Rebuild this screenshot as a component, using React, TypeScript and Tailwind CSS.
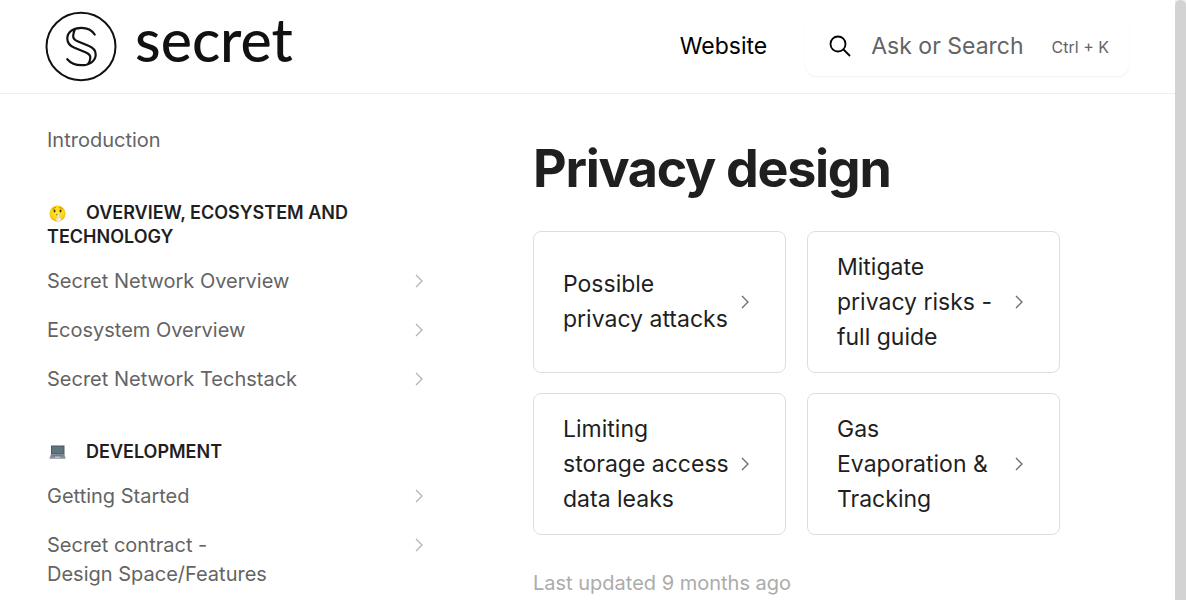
import React from "react";

type NavItem = { lines: string[]; hasChildren?: boolean };
type NavGroup = { title: string; icon: React.ReactNode; items: NavItem[] };

function Chevron({ className }: { className: string }) {
  return (
    <svg viewBox="0 0 16 16" className={className} fill="none" stroke="currentColor" aria-hidden="true">
      <path d="M5 2 11 8 5 14" strokeWidth="1.3" />
    </svg>
  );
}

function ShushIcon() {
  return (
    <svg viewBox="0 0 34 34" className="mr-5 ml-0.5 inline-block size-[17px] align-[-3px]" aria-hidden="true">
      <defs>
        <radialGradient id="face" cx="50%" cy="45%" r="55%">
          <stop offset="0" stopColor="#ffe92e" />
          <stop offset="0.7" stopColor="#fdd818" />
          <stop offset="1" stopColor="#f2aa12" />
        </radialGradient>
      </defs>
      <circle cx="17" cy="17" r="16" fill="url(#face)" />
      <path d="M7 8q3-3 6-3M21 5q3 0 6 3" fill="none" stroke="#a87a1a" strokeWidth="1.6" strokeLinecap="round" />
      <ellipse cx="11" cy="12" rx="2" ry="2.800" fill="#453016" />
      <ellipse cx="23" cy="12" rx="2" ry="2.800" fill="#453016" />
      <path d="M14 20q3-2 6 0" fill="none" stroke="#9b5a16" strokeWidth="2" />
      <path d="M17 19q2-2 3 1v5l3 1q2 2 1 4l-2 3h-5l-3-4q-1-3 1-2l2 1z" fill="#eff0f2" stroke="#cfd2d5" strokeWidth="0.8" />
    </svg>
  );
}

function LaptopIcon() {
  return (
    <svg viewBox="0 0 34 34" className="mr-5 ml-0.5 inline-block size-[17px] align-[-3px]" aria-hidden="true">
      <path d="M4 3h27v17H4z" fill="#455a64" />
      <path d="M6 5h23v14H6z" fill="#60747f" />
      <path d="M4 20h27l2 8H1z" fill="#8d969d" />
      <path d="M6 21h23l1 4H5z" fill="#737d85" />
      <path d="M12 25h10v3H12z" fill="#b8c0c5" />
      <path d="M1 28h32v2H1z" fill="#a5afb6" />
    </svg>
  );
}

const groups: NavGroup[] = [
  {
    title: "Overview, Ecosystem and Technology",
    icon: <ShushIcon />,
    items: [
      { lines: ["Secret Network Overview"], hasChildren: true },
      { lines: ["Ecosystem Overview"], hasChildren: true },
      { lines: ["Secret Network Techstack"], hasChildren: true },
    ],
  },
  {
    title: "Development",
    icon: <LaptopIcon />,
    items: [
      { lines: ["Getting Started"], hasChildren: true },
      { lines: ["Secret contract -", "Design Space/Features"], hasChildren: true },
    ],
  },
];

const cards: string[][] = [
  ["Possible", "privacy attacks"],
  ["Mitigate", "privacy risks -", "full guide"],
  ["Limiting", "storage access", "data leaks"],
  ["Gas", "Evaporation &", "Tracking"],
];

function Lines({ lines }: { lines: string[] }) {
  return (
    <span>
      {lines.map((line) => (
        <span key={line} className="block whitespace-nowrap">
          {line}
        </span>
      ))}
    </span>
  );
}

function NavLink({ item }: { item: NavItem }) {
  return (
    <li>
      <a href="#" className="flex justify-between py-[10px] text-[20px] leading-[29px] text-[#646464]">
        <Lines lines={item.lines} />
        {item.hasChildren && <Chevron className="mt-[6px] size-4 text-[#b4b4b4]" />}
      </a>
    </li>
  );
}

function Logo() {
  return (
    <a href="#" aria-label="secret" className="flex items-center gap-[18px] text-[#111]">
      <svg viewBox="0 0 72 72" className="size-[72px]" fill="none" stroke="currentColor" aria-hidden="true">
        <ellipse cx="36" cy="35.500" rx="34.5" ry="33.700" strokeWidth="2" />
        <path
          d="M49.700 23.500C46.500 18.500 41.500 16.800 36.500 16.800C28.500 16.800 22.300 20.800 22.300 27.500C22.300 32.500 25 35 29.500 36.800L41 41.500C44.500 43 45.500 45 45.300 47C45.100 49.300 44.500 51 43.300 52.600M22.300 48.200C25.500 52 30.500 54.200 36.500 54.200C44.500 54.200 50.700 50 50.700 43.500C50.700 39 48 36.500 43.500 34.800L32.500 30.300C29 28.800 28 27 28.200 24.600C28.400 22.500 28.800 20.800 29.700 18.700"
          strokeWidth="2.200"
          strokeLinecap="round"
          strokeLinejoin="round"
        />
      </svg>
      <span className="pb-[14px] font-[Lato] text-[59px] leading-[72px] font-medium">secret</span>
    </a>
  );
}

export default function App() {
  return (
    <div className="flex h-screen overflow-hidden bg-white font-[Inter,sans-serif] text-[#1f1f1f]">
      <div className="min-w-0 flex-1">
        <header className="flex h-[94px] items-center justify-between border-b border-[#eeeeee] pr-[46px] pl-[45px]">
          <Logo />
          <div className="flex items-center gap-[38px]">
            <a href="#" className="text-[23px] leading-[35px] text-black">
              Website
            </a>
            <button
              type="button"
              className="flex h-[58px] items-center rounded-xl bg-white pr-5 pl-6 text-[#646464] shadow-[0_1px_2px_rgba(0,0,0,0.06)]"
            >
              <svg viewBox="0 0 24 24" className="size-6 text-black" fill="none" stroke="currentColor" aria-hidden="true">
                <circle cx="9" cy="9" r="7.500" strokeWidth="1.800" />
                <path d="m14.500 14.500 6.500 6.500" strokeWidth="1.800" />
              </svg>
              <span className="ml-[18px] text-[23px] leading-[35px]">Ask or Search</span>
              <kbd className="ml-7 font-[Inter,sans-serif] text-[16px] leading-6">Ctrl + K</kbd>
            </button>
          </div>
        </header>
        <div className="flex">
          <nav aria-label="Table of contents" className="w-[427px] shrink-0 pt-[22px] pl-[47px]">
            <ul>
              <NavLink item={{ lines: ["Introduction"] }} />
            </ul>
            {groups.map((group) => (
              <section key={group.title} className="mt-9">
                <h2 className="mb-2 text-[18px] leading-6 font-semibold uppercase">
                  {group.icon}
                  {group.title}
                </h2>
                <ul>
                  {group.items.map((item) => (
                    <NavLink key={item.lines[0]} item={item} />
                  ))}
                </ul>
              </section>
            ))}
          </nav>
          <main className="mr-[115px] ml-[106px] min-w-0 flex-1 pt-10">
            <h1 className="text-[52px] leading-[70px] font-bold tracking-tight">Privacy design</h1>
            <div className="mt-[27px] grid grid-cols-2 gap-x-[21px] gap-y-5">
              {cards.map((lines) => (
                <a
                  key={lines[0]}
                  href="#"
                  className="flex h-[142px] items-center justify-between rounded-lg border border-[#dedede] pr-8 pl-[29px] text-[23px] leading-[35px]"
                >
                  <Lines lines={lines} />
                  <Chevron className="size-4 shrink-0 text-[#6b6b6b]" />
                </a>
              ))}
            </div>
            <p className="mt-[34px] text-[20px] leading-[29px] text-[#acacac]">Last updated 9 months ago</p>
          </main>
        </div>
      </div>
      <div className="w-[11px] shrink-0 bg-[#f0f0f0]" aria-hidden="true">
        <div className="h-full rounded-t-full bg-[#d3d3d3]" />
      </div>
    </div>
  );
}
